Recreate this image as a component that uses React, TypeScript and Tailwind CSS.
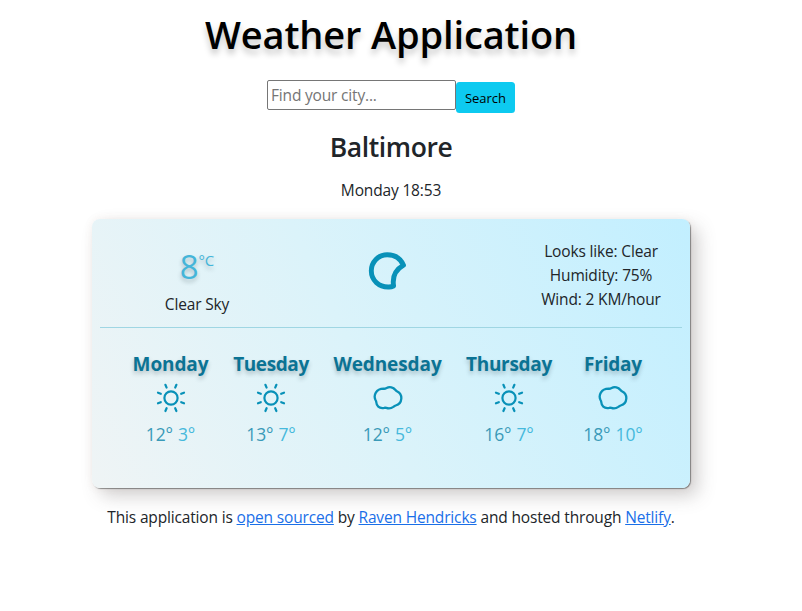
import React from "react";

const shade = "[text-shadow:0px_3px_4px_rgba(60,80,90,0.32)]";

function Sun() {
  return (
    <svg className="block h-[30px] w-[30px]" viewBox="0 0 30 30" fill="none" stroke="#0891b8" strokeWidth="2.2" strokeLinecap="round">
      <circle cx="15" cy="15" r="6.6" />
      <path d="M10.6 4.6l-1.2-2.8M19.2 4.6l1.2-2.8M25.2 10.8l2.8-1.1M25.2 19.2l2.8 1.1M19.2 25.2l1.2 2.8M10.6 25.2l-1.2 2.8M4.8 19.2L2 20.3M4.8 10.8L2 9.7" />
    </svg>
  );
}

function Cloud() {
  return (
    <svg className="block h-[30px] w-[30px]" viewBox="0 0 30 30" fill="none" stroke="#0891b8" strokeWidth="2.3" strokeLinejoin="round">
      <path d="M10.6 5.7C12 5.9 12.700 5.500 13.600 5C16.500 3.500 20.300 4.300 22.500 7C23 7.700 23.500 8.100 24.300 8.500C27 9.900 28.500 12.600 28.300 15.600C28 19.600 25.300 21.800 22.700 22.500C21.700 22.800 21.200 23.200 20.300 23.900C17.800 25.700 15.800 25.700 13.300 24.900C12.500 24.700 12 24.700 11.200 24.900C5.700 25.900 3.500 22.500 3.300 19.200C3.200 18.400 3 17.800 2.500 17C0.200 12.200 3 5.800 10.600 5.700Z" />
    </svg>
  );
}

function Moon() {
  return (
    <svg className="block h-[40px] w-[40px]" viewBox="0 0 40 40" fill="none" stroke="#0891b8" strokeWidth="4.9" strokeLinejoin="round">
      <path d="M35.500 14.200C32.500 7.300 26.800 3.700 19.200 3.700C10.300 3.700 3.300 11 3.300 19.800C3.300 29.300 11 36.400 21 36C22.600 35.900 24 35.600 25.600 34.900C24.100 25.800 27.200 19 35.500 14.200Z" />
    </svg>
  );
}

const days = [
  { name: "Monday", col: "w-[101px]", font: "tracking-[-0.1px]", hi: "12°", lo: "3°", sun: true },
  { name: "Tuesday", col: "w-[100px]", font: "tracking-[-0.4px]", hi: "13°", lo: "7°", sun: true },
  { name: "Wednesday", col: "w-[133px]", font: "tracking-[-0.1px]", hi: "12°", lo: "5°", sun: false },
  { name: "Thursday", col: "w-[110px]", font: "tracking-[-0.3px]", hi: "16°", lo: "7°", sun: true },
  { name: "Friday", col: "w-[98px]", font: "tracking-[-0.2px]", hi: "18°", lo: "10°", sun: false },
];

export default function App() {
  return (
    <div className="h-[611px] w-full overflow-hidden bg-white font-['Open_Sans','Noto_Sans',sans-serif] text-[15.5px] leading-6 tracking-[-0.16px] text-[#212529]">
      <main className="flex w-[782px] flex-col items-center">
        <h1 className="mt-[10px] h-[48px] whitespace-nowrap text-[38px] font-semibold leading-[48px] tracking-[-0.15px] text-black [text-shadow:0px_5px_6px_rgba(0,0,0,0.22)]">
          Weather Application
        </h1>
        <form className="mt-[22px] flex h-[33px] items-start" onSubmit={(e) => e.preventDefault()}>
          <input
            className="h-[30px] w-[189px] rounded-[2px] border border-[#767676] bg-white px-[3px] text-[15.5px] tracking-[-0.18px] placeholder:text-[#757575] placeholder:opacity-100"
            placeholder="Find your city..."
          />
          <button className="mt-[2px] h-[31px] w-[59px] rounded-[3.5px] bg-[#0dcaf0] text-[13px] tracking-[0px] text-black">Search</button>
        </form>
        <h2 className="mt-[17px] whitespace-nowrap text-[26.5px] font-semibold leading-[34px] tracking-[-0.4px]">Baltimore</h2>
        <p className="mt-[14px] whitespace-nowrap">Monday 18:53</p>

        <section className="mt-[17px] h-[269px] w-[598px] rounded-[8px] bg-[linear-gradient(64deg,#eff4f5_0%,#dbf3fa_45%,#c2efff_100%)] px-2 shadow-[1px_1px_1px_rgba(0,0,0,0.4),8px_8px_18px_rgba(80,75,75,0.26),0_0_8px_rgba(150,100,80,0.08)]">
          <div className="flex h-[109px] items-start border-b border-[#9fd6e3]">
            <div className="flex w-[194px] flex-col items-center pt-[28px]">
              <div className={`flex h-[40px] items-start text-[#44b5d9] ${shade}`}>
                <span className="text-[33px] leading-[39px]">8</span>
                <span className="text-[15px] leading-[26px]">°C</span>
              </div>
              <p className="mt-[5px]">Clear Sky</p>
            </div>
            <div className="flex w-[188px] justify-center pt-[32px]">
              <Moon />
            </div>
            <div className="ml-[6px] flex w-[194px] flex-col items-center pl-[32px] pt-[20px]">
              <p>Looks like: Clear</p>
              <p>Humidity: 75%</p>
              <p>Wind: 2 KM/hour</p>
            </div>
          </div>
          <div className="flex pl-[20px] pt-[23px]">
            {days.map((d) => (
              <div key={d.name} className={`flex shrink-0 flex-col items-center ${d.col}`}>
                <h3 className={`text-[19px] font-bold leading-[26px] text-[#0b7394] ${d.font} ${shade}`}>{d.name}</h3>
                <div className="mt-[6px]">
                  {d.sun ? <Sun /> : <Cloud />}
                </div>
                <p className="mt-[8px] flex gap-[5px] text-[17.5px] leading-[26px] tracking-[-0.1px] text-[#3a9ab8]">
                  <span>{d.hi}</span>
                  <span className="text-[#46b9dc]">{d.lo}</span>
                </p>
              </div>
            ))}
          </div>
        </section>

        <footer className="mt-[17px] whitespace-nowrap">
          This application is <a className="text-[#1a6fe8] underline">open sourced</a> by{" "}
          <a className="text-[#1a6fe8] underline">Raven Hendricks</a> and hosted through{" "}
          <a className="text-[#1a6fe8] underline">Netlify</a>.
        </footer>
      </main>
    </div>
  );
}
